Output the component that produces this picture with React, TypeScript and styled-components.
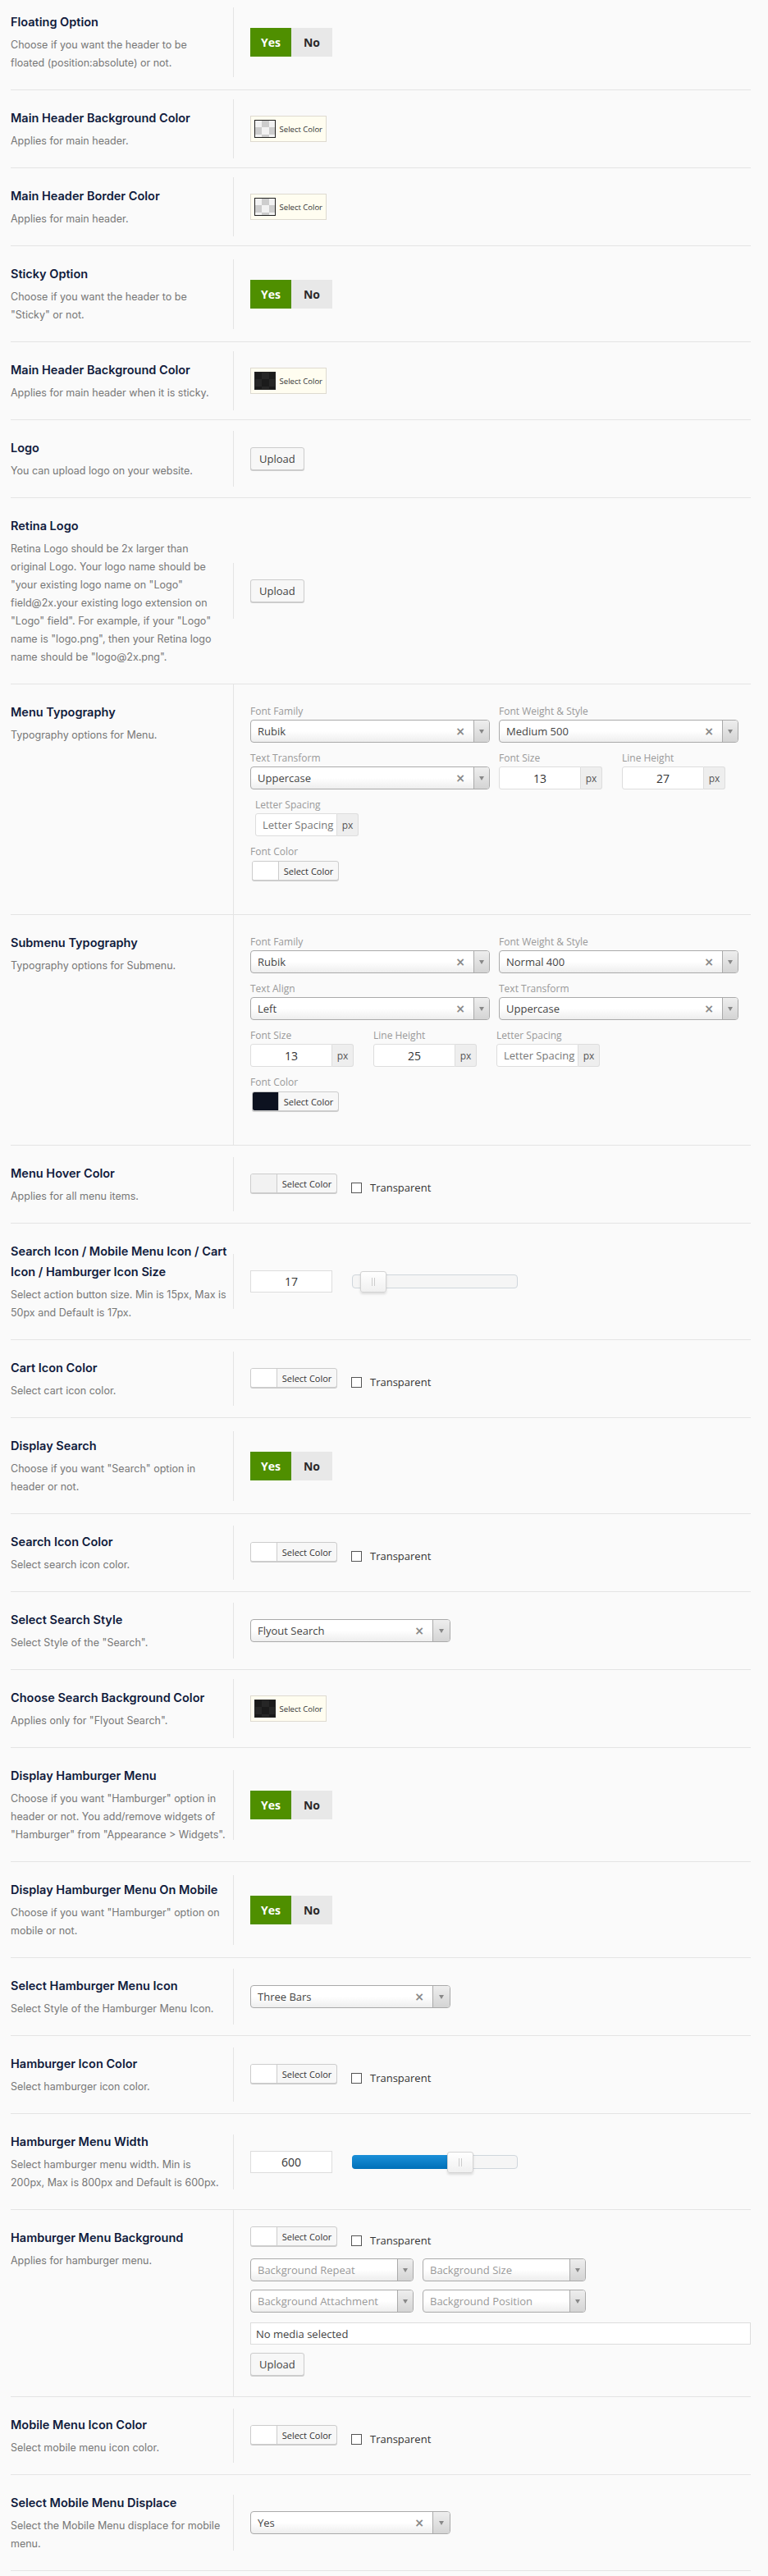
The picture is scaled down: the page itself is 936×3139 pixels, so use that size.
import { type ReactNode } from "react";
import styled, { createGlobalStyle } from "styled-components";

const GlobalStyle = createGlobalStyle`
  html, body {
    margin: 0;
    background: #fafafa;
  }
  body {
    font-family: "Open Sans", "Liberation Sans", sans-serif;
  }
`;

const Page = styled.div`
  margin-top: -7px;
  padding: 0 21px 0 13px;
`;

const Row = styled.div`
  display: flex;
  border-bottom: 1px solid #e4e4e4;
`;

const Info = styled.div`
  width: 271px;
  flex-shrink: 0;
  padding: 21px 0 21px;
`;

const Title = styled.h3`
  margin: 0 0 5px;
  font: 600 14.5px/25px Inter, "Noto Sans", sans-serif;
  color: #101b3c;
  white-space: nowrap;
`;

const Desc = styled.p`
  margin: 0;
  font: 400 12.5px/22px Inter, "Noto Sans", sans-serif;
  color: #777;
  white-space: nowrap;
`;

const Field = styled.div`
  flex: 1;
  align-self: center;
  border-left: 1px solid #e4e4e4;
  padding: 20px 0 20px 20px;
`;

/* yes / no switch */
const Toggle = styled.div`
  display: flex;
  width: fit-content;
  margin: 5px 0;
`;

const ToggleOption = styled.span<{ $on?: boolean }>`
  width: 50px;
  height: 35px;
  display: flex;
  align-items: center;
  justify-content: center;
  font: 700 14px "Open Sans", sans-serif;
  background: ${(p) => (p.$on ? "#4f8f00" : "#e8e8e8")};
  color: ${(p) => (p.$on ? "#fff" : "#2a2a2a")};
`;

/* classic colour picker (yellow one) */
const ClassicPicker = styled.div`
  display: flex;
  align-items: center;
  gap: 5px;
  width: 93px;
  height: 32px;
  box-sizing: border-box;
  padding: 0 4px;
  background: #fffdf0;
  border: 1px solid #dedad0;
  font: 9.5px "Open Sans", sans-serif;
  color: #333;
  white-space: nowrap;
`;

const Swatch = styled.span<{ $dark?: boolean }>`
  width: 27px;
  height: 22px;
  box-sizing: border-box;
  border: 1px solid #222;
  background-color: ${(p) => (p.$dark ? "#1d1d1d" : "#fff")};
  background-image: ${(p) =>
    p.$dark
      ? "repeating-conic-gradient(#262626 0% 25%, #1b1b1b 0% 50%)"
      : "repeating-conic-gradient(#cdcdcd 0% 25%, #f2f2f2 0% 50%)"};
  background-size: 18px 18px;
  background-position: -1px -1px;
`;

/* wp colour button */
const ColorRow = styled.div`
  display: flex;
  align-items: flex-start;
`;

const ColorButton = styled.div<{ $indent?: number; $top?: number }>`
  display: flex;
  flex-shrink: 0;
  width: 106px;
  height: 24px;
  box-sizing: border-box;
  border: 1px solid #ccc;
  border-radius: 3px;
  box-shadow: 0 1px 0 #ccc;
  background: #f7f7f7;
  overflow: hidden;
  margin-left: ${(p) => p.$indent ?? 0}px;
  margin-top: ${(p) => p.$top ?? 0}px;
`;

const ColorChip = styled.span<{ $color: string }>`
  width: 31px;
  background: ${(p) => p.$color};
  border-right: 1px solid #ccc;
`;

const ColorLabel = styled.span`
  flex: 1;
  display: flex;
  align-items: center;
  justify-content: center;
  font: 11px "Open Sans", sans-serif;
  color: #333;
`;

const CheckLabel = styled.label`
  display: flex;
  align-items: center;
  gap: 10px;
  margin: 8px 0 0 17px;
  font: 13px/18px "Open Sans", sans-serif;
  color: #333;
`;

const CheckBox = styled.span`
  width: 13px;
  height: 13px;
  box-sizing: border-box;
  border: 1px solid #555;
  background: #fff;
`;

const Button = styled.button`
  display: block;
  height: 28px;
  padding: 0 10px;
  font: 13px "Open Sans", sans-serif;
  color: #444;
  background: #f7f7f7;
  border: 1px solid #ccc;
  border-radius: 3px;
  box-shadow: 0 1px 0 #ccc;
`;

/* select2 style dropdown */
const Select = styled.div<{ $w: number }>`
  display: flex;
  align-items: center;
  width: ${(p) => p.$w}px;
  height: 28px;
  box-sizing: border-box;
  border: 1px solid #aaa;
  border-radius: 4px;
  background: linear-gradient(#fff 50%, #eee);
  overflow: hidden;
  font: 13px "Open Sans", sans-serif;
`;

const SelectValue = styled.span<{ $placeholder?: boolean }>`
  flex: 1;
  padding-left: 8px;
  white-space: nowrap;
  color: ${(p) => (p.$placeholder ? "#999" : "#444")};
`;

const SelectClear = styled.span`
  margin-right: 10px;
  font: 700 14px "DejaVu Sans", sans-serif;
  color: #8a8a8a;
`;

const SelectArrow = styled.span<{ $w?: number }>`
  width: ${(p) => p.$w ?? 18}px;
  align-self: stretch;
  display: flex;
  align-items: center;
  justify-content: center;
  border-left: 1px solid #aaa;
  background: linear-gradient(#eee, #d4d4d4);

  &::after {
    content: "";
    border-left: 3px solid transparent;
    border-right: 3px solid transparent;
    border-top: 5px solid #888;
  }
`;

/* typography block */
const Typo = styled.div`
  margin: 5px 0 21px;
`;

const TypoLine = styled.div`
  display: flex;
  margin-bottom: 11px;

  &:last-child {
    margin-bottom: 0;
  }
`;

const TypoField = styled.div<{ $w: number; $indent?: number }>`
  width: ${(p) => p.$w}px;
  margin-left: ${(p) => p.$indent ?? 0}px;
`;

const TypoLabel = styled.div`
  font: 12px/16px "Open Sans", sans-serif;
  color: #999;
  margin-bottom: 2px;
  white-space: nowrap;
`;

const InputGroup = styled.div`
  display: flex;
  height: 28px;
`;

const NumberBox = styled.div<{ $placeholder?: boolean }>`
  width: 100px;
  box-sizing: border-box;
  display: flex;
  align-items: center;
  justify-content: ${(p) => (p.$placeholder ? "flex-start" : "center")};
  padding-left: ${(p) => (p.$placeholder ? "8px" : "0")};
  border: 1px solid #ddd;
  border-radius: 3px 0 0 3px;
  background: #fff;
  font: ${(p) => (p.$placeholder ? "13px" : "14px")} "Open Sans", sans-serif;
  color: ${(p) => (p.$placeholder ? "#777" : "#333")};
  white-space: nowrap;
  overflow: hidden;
`;

const Addon = styled.span`
  width: 26px;
  box-sizing: border-box;
  display: flex;
  justify-content: center;
  padding-top: 5px;
  border: 1px solid #ddd;
  border-left: 0;
  border-radius: 0 3px 3px 0;
  background: #eee;
  font: 12px "Open Sans", sans-serif;
  color: #555;
`;

/* slider */
const SliderRow = styled.div`
  display: flex;
  align-items: center;
  gap: 24px;
`;

const ValueBox = styled.div`
  width: 100px;
  height: 27px;
  box-sizing: border-box;
  border: 1px solid #ddd;
  background: #fff;
  display: flex;
  align-items: center;
  justify-content: center;
  font: 14px "Open Sans", sans-serif;
  color: #333;
`;

const SliderTrack = styled.div`
  position: relative;
  width: 202px;
  height: 17px;
  box-sizing: border-box;
  border: 1px solid #cfd6dc;
  border-radius: 4px;
  background: #f5f5f5;
`;

const SliderFill = styled.div`
  position: absolute;
  left: -1px;
  top: -1px;
  bottom: -1px;
  border-radius: 4px 0 0 4px;
  background: linear-gradient(#1a8fd8, #0070b8);
`;

const SliderHandle = styled.div`
  position: absolute;
  top: -5px;
  width: 32px;
  height: 26px;
  box-sizing: border-box;
  border: 1px solid #d3d3d3;
  border-radius: 3px;
  background: linear-gradient(#fff, #f0f0f0);
  box-shadow: 0 2px 3px rgba(0, 0, 0, 0.12);

  &::after {
    content: "";
    position: absolute;
    left: 13px;
    top: 7px;
    width: 2px;
    height: 10px;
    border-left: 1px solid #ccc;
    border-right: 1px solid #ccc;
  }
`;

/* background block */
const BgBlock = styled.div`
  padding-bottom: 5px;
`;

const BgGrid = styled.div`
  display: grid;
  grid-template-columns: 199px 199px;
  gap: 10px 11px;
  margin: 13px 0 12px;
`;

const MediaBox = styled.div`
  height: 27px;
  box-sizing: border-box;
  border: 1px solid #ddd;
  background: #fff;
  display: flex;
  align-items: center;
  padding-left: 6px;
  margin-bottom: 10px;
  font: 13px "Open Sans", sans-serif;
  color: #444;
`;

function YesNo() {
  return (
    <Toggle>
      <ToggleOption $on>Yes</ToggleOption>
      <ToggleOption>No</ToggleOption>
    </Toggle>
  );
}

function Classic({ dark }: { dark?: boolean }) {
  return (
    <ClassicPicker>
      <Swatch $dark={dark} />
      Select Color
    </ClassicPicker>
  );
}

function ColorPick({
  color = "#fff",
  indent,
  top,
}: {
  color?: string;
  indent?: number;
  top?: number;
}) {
  return (
    <ColorButton $indent={indent} $top={top}>
      <ColorChip $color={color} />
      <ColorLabel>Select Color</ColorLabel>
    </ColorButton>
  );
}

function ColorTransparent({ color }: { color?: string }) {
  return (
    <ColorRow>
      <ColorPick color={color} />
      <CheckLabel>
        <CheckBox />
        Transparent
      </CheckLabel>
    </ColorRow>
  );
}

function Dropdown({
  value,
  width,
  clear = true,
  placeholder,
  arrow,
}: {
  value: string;
  width: number;
  clear?: boolean;
  placeholder?: boolean;
  arrow?: number;
}) {
  return (
    <Select $w={width}>
      <SelectValue $placeholder={placeholder}>{value}</SelectValue>
      {clear && <SelectClear>×</SelectClear>}
      <SelectArrow $w={arrow} />
    </Select>
  );
}

function SelectField({ label, value }: { label: string; value: string }) {
  return (
    <TypoField $w={303}>
      <TypoLabel>{label}</TypoLabel>
      <Dropdown value={value} width={292} />
    </TypoField>
  );
}

function PxField({
  label,
  value,
  indent,
}: {
  label: string;
  value?: string;
  indent?: number;
}) {
  return (
    <TypoField $w={150} $indent={indent}>
      <TypoLabel>{label}</TypoLabel>
      <InputGroup>
        <NumberBox $placeholder={!value}>{value ?? label}</NumberBox>
        <Addon>px</Addon>
      </InputGroup>
    </TypoField>
  );
}

function FontColor({ color }: { color: string }) {
  return (
    <TypoField $w={150}>
      <TypoLabel>Font Color</TypoLabel>
      <ColorPick color={color} indent={2} top={3} />
    </TypoField>
  );
}

function Slider({ value, min, max }: { value: number; min: number; max: number }) {
  const pct = (value - min) / (max - min);
  const left = Math.round(pct * 170);
  return (
    <SliderRow>
      <ValueBox>{value}</ValueBox>
      <SliderTrack>
        {pct > 0.1 && <SliderFill style={{ width: left + 18 }} />}
        <SliderHandle style={{ left: left + (pct > 0.1 ? 2 : -1) }} />
      </SliderTrack>
    </SliderRow>
  );
}

type Option = {
  title: string[];
  desc: string[];
  control: ReactNode;
};

const options: Option[] = [
  {
    title: ["Floating Option"],
    desc: ["Choose if you want the header to be", "floated (position:absolute) or not."],
    control: <YesNo />,
  },
  {
    title: ["Main Header Background Color"],
    desc: ["Applies for main header."],
    control: <Classic />,
  },
  {
    title: ["Main Header Border Color"],
    desc: ["Applies for main header."],
    control: <Classic />,
  },
  {
    title: ["Sticky Option"],
    desc: ["Choose if you want the header to be", "\"Sticky\" or not."],
    control: <YesNo />,
  },
  {
    title: ["Main Header Background Color"],
    desc: ["Applies for main header when it is sticky."],
    control: <Classic dark />,
  },
  {
    title: ["Logo"],
    desc: ["You can upload logo on your website."],
    control: <Button>Upload</Button>,
  },
  {
    title: ["Retina Logo"],
    desc: [
      "Retina Logo should be 2x larger than",
      "original Logo. Your logo name should be",
      "\"your existing logo name on \"Logo\"",
      "field@2x.your existing logo extension on",
      "\"Logo\" field\". For example, if your \"Logo\"",
      "name is \"logo.png\", then your Retina logo",
      "name should be \"logo@2x.png\".",
    ],
    control: <Button>Upload</Button>,
  },
  {
    title: ["Menu Typography"],
    desc: ["Typography options for Menu."],
    control: (
      <Typo>
        <TypoLine>
          <SelectField label="Font Family" value="Rubik" />
          <SelectField label="Font Weight & Style" value="Medium 500" />
        </TypoLine>
        <TypoLine>
          <SelectField label="Text Transform" value="Uppercase" />
          <PxField label="Font Size" value="13" />
          <PxField label="Line Height" value="27" />
        </TypoLine>
        <TypoLine>
          <PxField label="Letter Spacing" indent={6} />
        </TypoLine>
        <TypoLine>
          <FontColor color="#fff" />
        </TypoLine>
      </Typo>
    ),
  },
  {
    title: ["Submenu Typography"],
    desc: ["Typography options for Submenu."],
    control: (
      <Typo>
        <TypoLine>
          <SelectField label="Font Family" value="Rubik" />
          <SelectField label="Font Weight & Style" value="Normal 400" />
        </TypoLine>
        <TypoLine>
          <SelectField label="Text Align" value="Left" />
          <SelectField label="Text Transform" value="Uppercase" />
        </TypoLine>
        <TypoLine>
          <PxField label="Font Size" value="13" />
          <PxField label="Line Height" value="25" />
          <PxField label="Letter Spacing" />
        </TypoLine>
        <TypoLine>
          <FontColor color="#0d1220" />
        </TypoLine>
      </Typo>
    ),
  },
  {
    title: ["Menu Hover Color"],
    desc: ["Applies for all menu items."],
    control: <ColorTransparent color="#f2f2f2" />,
  },
  {
    title: ["Search Icon / Mobile Menu Icon / Cart", "Icon / Hamburger Icon Size"],
    desc: ["Select action button size. Min is 15px, Max is", "50px and Default is 17px."],
    control: <Slider value={17} min={15} max={50} />,
  },
  {
    title: ["Cart Icon Color"],
    desc: ["Select cart icon color."],
    control: <ColorTransparent />,
  },
  {
    title: ["Display Search"],
    desc: ["Choose if you want \"Search\" option in", "header or not."],
    control: <YesNo />,
  },
  {
    title: ["Search Icon Color"],
    desc: ["Select search icon color."],
    control: <ColorTransparent />,
  },
  {
    title: ["Select Search Style"],
    desc: ["Select Style of the \"Search\"."],
    control: <Dropdown value="Flyout Search" width={244} arrow={20} />,
  },
  {
    title: ["Choose Search Background Color"],
    desc: ["Applies only for \"Flyout Search\"."],
    control: <Classic dark />,
  },
  {
    title: ["Display Hamburger Menu"],
    desc: [
      "Choose if you want \"Hamburger\" option in",
      "header or not. You add/remove widgets of",
      "\"Hamburger\" from \"Appearance > Widgets\".",
    ],
    control: <YesNo />,
  },
  {
    title: ["Display Hamburger Menu On Mobile"],
    desc: ["Choose if you want \"Hamburger\" option on", "mobile or not."],
    control: <YesNo />,
  },
  {
    title: ["Select Hamburger Menu Icon"],
    desc: ["Select Style of the Hamburger Menu Icon."],
    control: <Dropdown value="Three Bars" width={244} arrow={20} />,
  },
  {
    title: ["Hamburger Icon Color"],
    desc: ["Select hamburger icon color."],
    control: <ColorTransparent />,
  },
  {
    title: ["Hamburger Menu Width"],
    desc: ["Select hamburger menu width. Min is", "200px, Max is 800px and Default is 600px."],
    control: <Slider value={600} min={200} max={800} />,
  },
  {
    title: ["Hamburger Menu Background"],
    desc: ["Applies for hamburger menu."],
    control: (
      <BgBlock>
        <ColorTransparent />
        <BgGrid>
          <Dropdown value="Background Repeat" width={199} clear={false} placeholder />
          <Dropdown value="Background Size" width={199} clear={false} placeholder />
          <Dropdown value="Background Attachment" width={199} clear={false} placeholder />
          <Dropdown value="Background Position" width={199} clear={false} placeholder />
        </BgGrid>
        <MediaBox>No media selected</MediaBox>
        <Button>Upload</Button>
      </BgBlock>
    ),
  },
  {
    title: ["Mobile Menu Icon Color"],
    desc: ["Select mobile menu icon color."],
    control: <ColorTransparent />,
  },
  {
    title: ["Select Mobile Menu Displace"],
    desc: ["Select the Mobile Menu displace for mobile", "menu."],
    control: <Dropdown value="Yes" width={244} arrow={20} />,
  },
];

export default function App() {
  return (
    <>
      <GlobalStyle />
      <Page>
        {options.map((opt, i) => (
          <Row key={i}>
            <Info>
              <Title>
                {opt.title.map((line, j) => (
                  <div key={j}>{line}</div>
                ))}
              </Title>
              <Desc>
                {opt.desc.map((line, j) => (
                  <span key={j}>
                    {j > 0 && <br />}
                    {line}
                  </span>
                ))}
              </Desc>
            </Info>
            <Field>{opt.control}</Field>
          </Row>
        ))}
      </Page>
    </>
  );
}
